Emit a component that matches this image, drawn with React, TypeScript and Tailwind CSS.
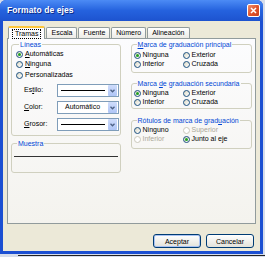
import React from 'react';

function Radio({ checked, disabled }: { checked?: boolean; disabled?: boolean }) {
  return (
    <span
      className={`w-[7px] h-[7px] rounded-full border flex items-center justify-center shrink-0 ${
        disabled ? 'border-[#CAC8BB] bg-white' : 'border-[#1C5180] bg-gradient-to-br from-[#DCD9C5] to-white'
      }`}
    >
      {checked && <span className="w-[3px] h-[3px] rounded-full bg-[#21A121]" />}
    </span>
  );
}

function Opt({
  label,
  u,
  checked,
  disabled,
  className = '',
}: {
  label: string;
  u?: number;
  checked?: boolean;
  disabled?: boolean;
  className?: string;
}) {
  const text =
    u === undefined ? (
      label
    ) : (
      <>
        {label.slice(0, u)}
        <span className="underline">{label[u]}</span>
        {label.slice(u + 1)}
      </>
    );
  return (
    <div className={`flex items-center gap-[2px] ${className}`}>
      <Radio checked={checked} disabled={disabled} />
      <span className={disabled ? 'text-[#ACA899]' : 'text-black'}>{text}</span>
    </div>
  );
}

function Group({
  title,
  className = '',
  children,
}: {
  title: React.ReactNode;
  className?: string;
  children?: React.ReactNode;
}) {
  return (
    <fieldset className={`border border-[#D0D0BF] rounded-[3px] ${className}`}>
      <legend className="ml-[3px] px-[1px] text-[#0046D5] leading-[9px]">{title}</legend>
      {children}
    </fieldset>
  );
}

function Combo({ children }: { children?: React.ReactNode }) {
  return (
    <div className="w-[62px] h-[13px] border border-[#7F9DB9] bg-white flex items-center">
      <div className="flex-1 flex items-center justify-center px-[3px]">{children}</div>
      <div className="w-[9px] h-[11px] mr-px bg-gradient-to-b from-[#CFDCFB] to-[#AFC5F6] rounded-[1px] flex items-center justify-center">
        <svg width="5" height="4" viewBox="0 0 5 4">
          <path d="M0.5 0.8 L2.5 2.8 L4.5 0.8" stroke="#4D6185" strokeWidth="1.3" fill="none" />
        </svg>
      </div>
    </div>
  );
}

function Tab({ label, active }: { label: string; active?: boolean }) {
  if (active) {
    return (
      <div className="h-[13px] -mb-px relative z-10 px-[3px] flex items-center border border-b-0 border-[#919B9C] border-t-2 border-t-[#FFC83C] rounded-t-[2px] bg-[#FCFCFE]">
        <span className="px-[2px] leading-[8px] border border-dotted border-black">{label}</span>
      </div>
    );
  }
  return (
    <div className="h-[11px] px-[4px] flex items-center border border-b-0 border-[#919B9C] rounded-t-[2px] bg-gradient-to-b from-white to-[#ECEBE6]">
      {label}
    </div>
  );
}

export default function App() {
  return (
    <div className="w-[265px] h-[257px] bg-[#D6DDEB] overflow-hidden relative font-['Liberation_Sans',Arial,sans-serif] text-[7px] text-black">
      <div className="w-[263px] h-[254px] flex flex-col bg-[#1B4FD2] rounded-t-[6px]">
        {/* title bar */}
        <div className="h-[21px] flex items-center justify-between pl-[7px] pr-[3px] rounded-t-[6px] bg-gradient-to-b from-[#4C8BF5] via-[#2562DE] to-[#1D53CF]">
          <span className="text-white font-bold text-[8.5px] tracking-[0.1px] [text-shadow:1px_1px_0_#0A2A8A]">
            Formato de ejes
          </span>
          <div className="w-[13px] h-[13px] rounded-[2px] border border-white bg-gradient-to-br from-[#F08E6C] via-[#E0552D] to-[#C8401C] flex items-center justify-center">
            <svg width="7" height="7" viewBox="0 0 7 7">
              <path d="M1 1 L6 6 M6 1 L1 6" stroke="white" strokeWidth="1.5" />
            </svg>
          </div>
        </div>

        {/* body */}
        <div className="flex-1 mx-[3px] mb-[3px] bg-[#ECE9D8] flex flex-col pt-[5px] px-[4px]">
          <div className="flex items-end pl-[1px] gap-[1px]">
            <Tab label="Tramas" active />
            <Tab label="Escala" />
            <Tab label="Fuente" />
            <Tab label="Número" />
            <Tab label="Alineación" />
          </div>

          <div className="h-[186px] border border-[#919B9C] bg-gradient-to-b from-[#FCFCFE] to-[#F4F3EE] flex pl-[3px] pr-[3px] pt-px gap-[10px]">
            {/* left column */}
            <div className="w-[110px] flex flex-col gap-[3px]">
              <Group title="Líneas" className="h-[96px] pl-[4px] pr-px">
                <div className="flex flex-col">
                  <Opt label="Automáticas" u={0} checked className="h-[10px]" />
                  <Opt label="Ninguna" u={0} className="h-[11px]" />
                  <Opt label="Personalizadas" className="h-[11px]" />
                </div>
                <div className="flex flex-col gap-[4px] mt-[3px] pl-[8px]">
                  <div className="flex items-center justify-between">
                    <span>
                      Es<span className="underline">t</span>ilo:
                    </span>
                    <Combo>
                      <div className="w-full h-px bg-black" />
                    </Combo>
                  </div>
                  <div className="flex items-center justify-between">
                    <span>
                      <span className="underline">C</span>olor:
                    </span>
                    <Combo>
                      <span>Automático</span>
                    </Combo>
                  </div>
                  <div className="flex items-center justify-between">
                    <span>
                      <span className="underline">G</span>rosor:
                    </span>
                    <Combo>
                      <div className="w-full h-px bg-black" />
                    </Combo>
                  </div>
                </div>
              </Group>
              <Group title="Muestra" className="h-[34px] px-[2px]">
                <div className="mt-[8px] h-px bg-[#333]" />
              </Group>
            </div>

            {/* right column */}
            <div className="w-[122px] flex flex-col">
              <Group
                title={
                  <>
                    <span className="underline">M</span>arca de graduación principal
                  </>
                }
                className="h-[33px] pl-[2px] pt-[2px]"
              >
                <div className="grid grid-cols-[49px_1fr] auto-rows-[9px]">
                  <Opt label="Ninguna" checked />
                  <Opt label="Exterior" />
                  <Opt label="Interior" />
                  <Opt label="Cruzada" />
                </div>
              </Group>
              <Group
                title={
                  <>
                    Marca <span className="underline">d</span>e graduación secundaria
                  </>
                }
                className="h-[30px] mt-[6px] pl-[2px] pt-px"
              >
                <div className="grid grid-cols-[49px_1fr] auto-rows-[9px]">
                  <Opt label="Ninguna" checked />
                  <Opt label="Exterior" />
                  <Opt label="Interior" />
                  <Opt label="Cruzada" />
                </div>
              </Group>
              <Group
                title={
                  <>
                    Rótulos de marca de grad<span className="underline">u</span>ación
                  </>
                }
                className="h-[33px] mt-[7px] pl-[2px] pt-px"
              >
                <div className="grid grid-cols-[49px_1fr] auto-rows-[9px]">
                  <Opt label="Ninguno" />
                  <Opt label="Superior" disabled />
                  <Opt label="Inferior" disabled />
                  <Opt label="Junto al eje" checked />
                </div>
              </Group>
            </div>
          </div>

          <div className="flex justify-end gap-[5px] mt-[10px] pr-[2px]">
            <button className="w-[48px] h-[14px] rounded-[3px] border border-[#003C74] bg-gradient-to-b from-white to-[#E3E2DA] shadow-[inset_0_0_0_1px_#A9C2F2] text-[7px] text-black leading-none">
              Aceptar
            </button>
            <button className="w-[48px] h-[14px] rounded-[3px] border border-[#003C74] bg-gradient-to-b from-white to-[#E3E2DA] text-[7px] text-black leading-none">
              Cancelar
            </button>
          </div>
        </div>
      </div>
      <div className="ml-[18px] mt-[1px] h-px bg-[#222]" />
    </div>
  );
}
